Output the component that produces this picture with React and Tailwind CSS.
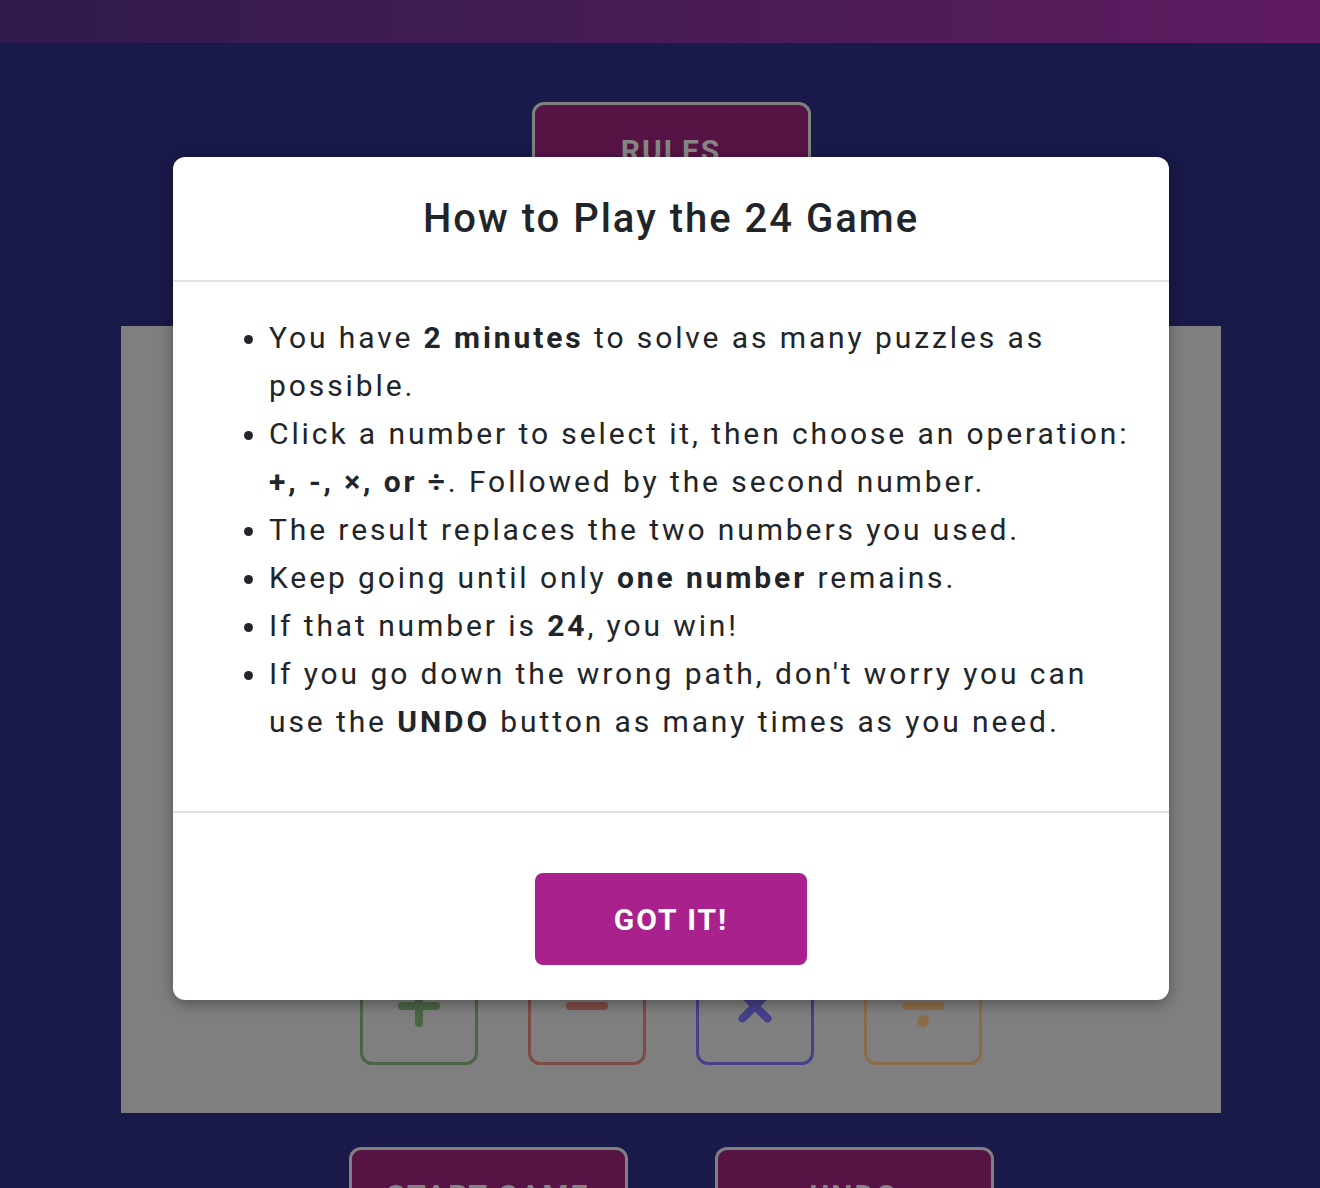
import React from 'react';

const ops = [
  { key: 'plus', border: 'border-[#4a6444]', color: '#4a6444' },
  { key: 'minus', border: 'border-[#7e4a44]', color: '#7e4a44' },
  { key: 'times', border: 'border-[#44408a]', color: '#44408a' },
  { key: 'divide', border: 'border-[#8a6d48]', color: '#8a6d48' },
];

const OpIcon = ({ type, color }) => (
  <svg width="42" height="42" viewBox="0 0 42 42" fill="none" stroke={color} strokeWidth="8" strokeLinecap="round">
    {type === 'plus' && (
      <>
        <line x1="4" y1="21" x2="38" y2="21" />
        <line x1="21" y1="4" x2="21" y2="38" />
      </>
    )}
    {type === 'minus' && <line x1="4" y1="21" x2="38" y2="21" />}
    {type === 'times' && (
      <>
        <line x1="8.5" y1="8.5" x2="33.5" y2="33.5" />
        <line x1="33.5" y1="8.5" x2="8.5" y2="33.5" />
      </>
    )}
    {type === 'divide' && (
      <>
        <line x1="4" y1="21" x2="38" y2="21" />
        <circle cx="21" cy="6" r="6" fill={color} stroke="none" />
        <circle cx="21" cy="36" r="6" fill={color} stroke="none" />
      </>
    )}
  </svg>
);

const DimButton = ({ children }) => (
  <button className="w-[279px] h-[96px] rounded-[12px] border-[3px] border-[#808080] bg-[#561444] text-[#858585] text-[30px] font-bold tracking-[2px]">
    {children}
  </button>
);

const App = () => {
  return (
    <div className="min-h-[1188px] bg-[#19194a] font-['Roboto','Liberation_Sans',sans-serif] overflow-hidden">
      {/* Header bar */}
      <div className="h-[43px] bg-gradient-to-r from-[#2f1a4d] to-[#5f1a5f]" />

      <div className="relative flex flex-col items-center pl-[22px]">
        <div className="mt-[59px]">
          <DimButton>RULES</DimButton>
        </div>

        {/* Game board (dimmed) */}
        <div className="mt-[128px] w-[1100px] h-[787px] bg-[#7f7f7f] flex flex-col justify-end items-center pb-[48px]">
          <div className="flex gap-[50px]">
            {ops.map((op) => (
              <div
                key={op.key}
                className={`w-[118px] h-[118px] rounded-[12px] border-[3px] ${op.border} flex items-center justify-center`}
              >
                <OpIcon type={op.key} color={op.color} />
              </div>
            ))}
          </div>
        </div>

        <div className="mt-[34px] flex gap-[87px]">
          <DimButton>START GAME</DimButton>
          <DimButton>UNDO</DimButton>
        </div>

        {/* Rules modal */}
        <div className="absolute top-[114px] left-[173px] w-[996px] bg-white rounded-[12px] shadow-[0_4px_14px_rgba(0,0,0,0.35)] text-[#212529]">
          <div className="h-[125px] flex items-center justify-center border-b-2 border-[#dee2e6]">
            <h2 className="text-[40px] font-medium tracking-[2px]">How to Play the 24 Game</h2>
          </div>
          <div className="px-[32px] pt-[32px] pb-[65px] border-b-2 border-[#dee2e6]">
            <ul className="list-disc pl-[64px] text-[30px] leading-[48px] tracking-[2.9px]">
              <li>
                You have <b>2 minutes</b> to solve as many puzzles as possible.
              </li>
              <li>
                Click a number to select it, then choose an operation: <b>+, -, ×, or ÷</b>. Followed by the second number.
              </li>
              <li>The result replaces the two numbers you used.</li>
              <li>
                Keep going until only <b>one number</b> remains.
              </li>
              <li>
                If that number is <b>24</b>, you win!
              </li>
              <li>
                If you go down the wrong path, don't worry you can use the <b>UNDO</b> button as many times as you need.
              </li>
            </ul>
          </div>
          <div className="flex justify-center pt-[60px] pb-[35px]">
            <button className="w-[272px] h-[92px] rounded-[8px] bg-[#a9218c] text-white text-[30px] font-bold tracking-[2px]">
              GOT IT!
            </button>
          </div>
        </div>
      </div>
    </div>
  );
};

export default App;
